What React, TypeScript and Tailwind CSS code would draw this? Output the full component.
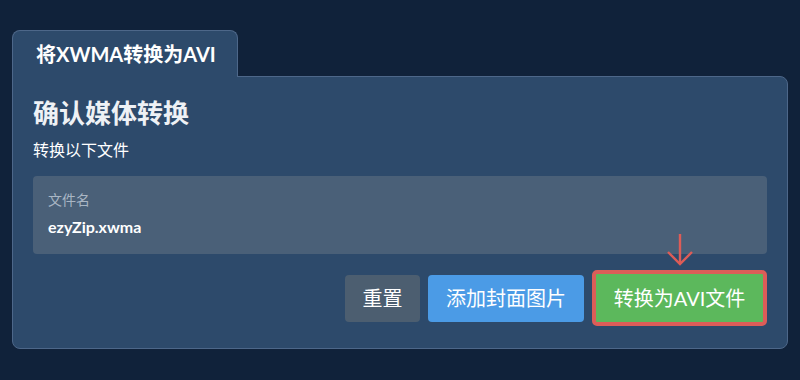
import React from "react";

const FONT = { fontFamily: "Lato, 'Noto Sans CJK SC', sans-serif" };

const App: React.FC = () => {
    return (
        <div className="w-[800px] h-[380px] bg-[#10223a] pt-[30px] px-[12px]" style={FONT}>
            <div className="flex">
                <div className="relative z-10 w-[226px] h-[47px] -mb-px bg-[#2d4a6b] border border-b-0 border-[#4d6789] rounded-t-[8px] pl-[23px] flex items-center">
                    <span className="text-[20px] font-bold text-white">将XWMA转换为AVI</span>
                </div>
            </div>
            <div className="relative h-[273px] bg-[#2d4a6b] border border-[#4d6789] rounded-b-[8px] rounded-tr-[8px] px-[20px] pt-[20px]">
                <h1 className="text-[26px] leading-[32px] font-bold text-[#eef1f5]">确认媒体转换</h1>
                <p className="mt-[9px] text-[16px] leading-[24px] text-white">转换以下文件</p>
                <div className="mt-[14px] h-[78px] bg-[#4a6078] rounded-[4px] px-[15px] pt-[14px]">
                    <div className="text-[14px] leading-[20px] text-[#a9b6c4]">文件名</div>
                    <div className="mt-[6px] text-[16px] leading-[22px] font-bold text-white">ezyZip.xwma</div>
                </div>
                <div className="mt-[16px] flex justify-end items-center gap-[8px]">
                    <button className="w-[75px] h-[47px] bg-[#4c5e70] rounded-[4px] text-[20px] text-white">重置</button>
                    <button className="w-[156px] h-[47px] bg-[#4b9be6] rounded-[4px] text-[20px] text-white">添加封面图片</button>
                    <div className="relative">
                        <svg className="absolute left-[74px] -top-[37px]" width="28" height="34" viewBox="0 0 28 34" fill="none" stroke="#dd5c57" strokeWidth="2.4">
                            <path d="M14 1 V31" />
                            <path d="M2 19 L14 31 L26 19" />
                        </svg>
                        <button className="w-[175px] h-[56px] border-[4px] border-[#dc5d58] bg-[#5cb85c] rounded-[5px] text-[20px] text-white">转换为AVI文件</button>
                    </div>
                </div>
            </div>
        </div>
    );
};

export default App;
